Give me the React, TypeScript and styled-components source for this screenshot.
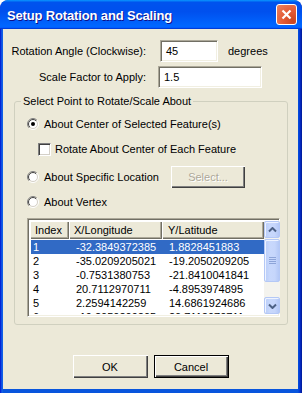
import React, { useId } from "react";
import styled, { createGlobalStyle } from "styled-components";

const Global = createGlobalStyle`
  html, body { margin: 0; padding: 0; background: #ffffff; }
  body { width: 302px; height: 393px; overflow: hidden; }
  #root { width: 302px; height: 393px; }
`;

const Window = styled.div`
  width: 302px;
  height: 393px;
  box-sizing: border-box;
  display: flex;
  flex-direction: column;
  background: linear-gradient(90deg, #0019cf 0, #0831d9 1px, #166aee 2px, #0855dd 3px, #0855dd 298px, #0042d6 299px, #0831d9 300px, #001ea0 301px);
  border-radius: 8px 8px 0 0;
  overflow: hidden;
  font-family: "Liberation Sans", Arial, sans-serif;
  font-size: 11px;
  color: #000;
`;

const TitleBar = styled.div`
  height: 29px;
  flex: none;
  display: flex;
  align-items: center;
  padding: 0 5px 0 7px;
  box-sizing: border-box;
  background: linear-gradient(180deg, #0997ff 0, #0053ee 8%, #0050ee 40%, #0066ff 88%, #0066ff 93%, #005bff 95%, #003dd7 96%, #003dd7 100%);
  border-radius: 8px 8px 0 0;
`;

const TitleText = styled.span`
  color: #fff;
  font-family: "Liberation Sans", Arial, sans-serif;
  font-weight: bold;
  font-size: 13px;
  letter-spacing: -0.15px;
  text-shadow: 1px 1px #0f1089;
  padding-top: 1px;
`;

const CloseButton = styled.div`
  margin-left: auto;
  width: 21px;
  height: 21px;
  box-sizing: border-box;
  border: 1px solid #fff;
  border-radius: 3px;
  background: radial-gradient(circle at 85% 85%, #c94520 0, #e35a35 45%, #ec8462 100%);
  display: flex;
  align-items: center;
  justify-content: center;
  margin-top: -1px;
`;

const Body = styled.div`
  flex: 1;
  margin: 0 4px 4px 3px;
  background: #ece9d8;
  display: flex;
  flex-direction: column;
  padding-top: 11px;
  box-sizing: border-box;
`;

const FieldRow = styled.div<{ $mt?: number }>`
  display: grid;
  grid-template-columns: 143px auto auto;
  justify-content: start;
  column-gap: 14px;
  align-items: center;
  height: 22px;
  margin-top: ${(p) => p.$mt ?? 0}px;
`;

const FieldLabel = styled.span`
  text-align: right;
  white-space: nowrap;
`;

const TextBox = styled.div<{ $w: number; $shift?: number }>`
  width: ${(p) => p.$w}px;
  height: 22px;
  box-sizing: border-box;
  background: #fff;
  border: 1px solid;
  border-color: #aca899 #ffffff #ffffff #aca899;
  box-shadow: inset 1px 1px #716f64, inset -1px -1px #f1efe2;
  padding-left: 5px;
  display: flex;
  align-items: center;
  margin-left: ${(p) => p.$shift ?? 0}px;
`;

const Unit = styled.span`
  margin-left: -4px;
`;

const GroupBox = styled.fieldset`
  margin: 7px 10px 0 11px;
  padding: 0 7px 7px 12px;
  border: 1px solid #d0d0bf;
  border-radius: 3px;
  min-width: 0;
  display: flex;
  flex-direction: column;
`;

const Legend = styled.legend`
  padding: 0 2px;
  margin-left: -6px;
  line-height: 12px;
  font-size: 11px;
`;

const OptionRow = styled.div<{ $h: number; $mt: number; $indent?: number }>`
  display: flex;
  align-items: center;
  height: ${(p) => p.$h}px;
  margin-top: ${(p) => p.$mt}px;
  padding-left: ${(p) => p.$indent ?? 0}px;
  white-space: nowrap;
`;

const RadioLabel = styled.span<{ $w?: number }>`
  margin-left: 5px;
  ${(p) => (p.$w ? `width: ${p.$w}px;` : "")}
`;

const CheckBox = styled.div`
  width: 13px;
  height: 13px;
  box-sizing: border-box;
  background: #fff;
  border: 1px solid;
  border-color: #808080 #ffffff #ffffff #808080;
  box-shadow: inset 1px 1px #404040, inset -1px -1px #d4d0c8;
`;

const CheckLabel = styled.span`
  margin-left: 4px;
`;

const ClassicButton = styled.div<{ $default?: boolean; $disabled?: boolean; $w: number; $h: number }>`
  width: ${(p) => p.$w}px;
  height: ${(p) => p.$h}px;
  box-sizing: border-box;
  background: #ece9d8;
  display: flex;
  align-items: center;
  justify-content: center;
  color: ${(p) => (p.$disabled ? "#aca899" : "#000")};
  text-shadow: ${(p) => (p.$disabled ? "1px 1px #ffffff" : "none")};
  border: ${(p) => (p.$default ? "1px solid #000" : "none")};
  box-shadow: inset 1px 1px #ffffff, inset -1px -1px #404040, inset -2px -2px #808080;
`;

const ListBox = styled.div`
  margin-top: 8px;
  height: 99px;
  box-sizing: border-box;
  border: 1px solid;
  border-color: #aca899 #ffffff #ffffff #aca899;
  box-shadow: inset 1px 1px #716f64, inset -1px -1px #f1efe2;
  padding: 2px;
  display: flex;
  background: #fff;
`;

const Table = styled.div`
  width: 234px;
  flex: none;
  display: flex;
  flex-direction: column;
  overflow: hidden;
`;

const HeaderRow = styled.div`
  display: grid;
  grid-template-columns: 39px 93px 1fr;
  height: 18px;
  flex: none;
`;

const HeaderCell = styled.div<{ $pad: number }>`
  background: #ece9d8;
  box-sizing: border-box;
  padding-left: ${(p) => p.$pad}px;
  display: flex;
  align-items: center;
  box-shadow: inset 1px 1px #ffffff, inset -1px -1px #716f64, inset -2px -2px #aca899;
`;

const Rows = styled.div`
  margin-top: 1px;
  display: flex;
  flex-direction: column;
`;

const DataRow = styled.div<{ $selected?: boolean }>`
  display: grid;
  grid-template-columns: 38px 93px 1fr;
  height: 14px;
  line-height: 14px;
  flex: none;
  margin-left: 1px;
  background: ${(p) => (p.$selected ? "#316ac5" : "transparent")};
  color: ${(p) => (p.$selected ? "#ffffff" : "#000")};
`;

const DataCell = styled.span<{ $pad: number }>`
  padding-left: ${(p) => p.$pad}px;
  white-space: nowrap;
`;

const ScrollBar = styled.div`
  width: 16px;
  flex: none;
  display: flex;
  flex-direction: column;
  background: #f4f3ee;
`;

const ScrollButton = styled.div<{ $h: number; $mt?: number }>`
  height: ${(p) => p.$h}px;
  margin-top: ${(p) => p.$mt ?? 0}px;
  flex: none;
  box-sizing: border-box;
  border: 1px solid #b4c8f6;
  border-radius: 2px;
  background: linear-gradient(90deg, #b9cdf8 0%, #c8d8fc 35%, #c6d6fb 70%, #b4c8f6 100%);
  box-shadow: inset 1px 1px #eef3ff;
  display: flex;
  align-items: center;
  justify-content: center;
`;

const Track = styled.div`
  flex: 1;
`;

const ButtonRow = styled.div`
  display: flex;
  justify-content: center;
  gap: 6px;
  margin-top: 30px;
`;

function Radio({ checked }: { checked?: boolean }) {
  const id = useId().replace(/:/g, "");
  return (
    <svg width="12" height="12" viewBox="0 0 12 12" style={{ flex: "none" }}>
      <defs>
        <linearGradient id={`o${id}`} x1="0" y1="0" x2="1" y2="1">
          <stop offset="0.5" stopColor="#808080" />
          <stop offset="0.5" stopColor="#ffffff" />
        </linearGradient>
        <linearGradient id={`i${id}`} x1="0" y1="0" x2="1" y2="1">
          <stop offset="0.5" stopColor="#404040" />
          <stop offset="0.5" stopColor="#d4d0c8" />
        </linearGradient>
      </defs>
      <circle cx="6" cy="6" r="5.5" fill="none" stroke={`url(#o${id})`} strokeWidth="1" />
      <circle cx="6" cy="6" r="4.5" fill="#fff" stroke={`url(#i${id})`} strokeWidth="1" />
      {checked && <circle cx="6" cy="6" r="2" fill="#000" />}
    </svg>
  );
}

function Chevron({ down }: { down?: boolean }) {
  return (
    <svg width="9" height="6" viewBox="0 0 9 6">
      <path
        d={down ? "M1 1.5 L4.5 5 L8 1.5" : "M1 4.5 L4.5 1 L8 4.5"}
        fill="none"
        stroke="#4d6185"
        strokeWidth="2"
      />
    </svg>
  );
}

function Grip() {
  return (
    <svg width="7" height="8" viewBox="0 0 7 8">
      {[0.5, 2.5, 4.5, 6.5].map((y) => (
        <line key={y} x1="0" y1={y} x2="7" y2={y} stroke="#8da4d8" strokeWidth="1" />
      ))}
    </svg>
  );
}

const rows = [
  ["1", "-32.3849372385", "1.8828451883"],
  ["2", "-35.0209205021", "-19.2050209205"],
  ["3", "-0.7531380753", "-21.8410041841"],
  ["4", "20.7112970711", "-4.8953974895"],
  ["5", "2.2594142259", "14.6861924686"],
  ["6", "-19.2050209205", "20.7112970711"],
];

export default function App() {
  return (
    <>
      <Global />
      <Window>
        <TitleBar>
          <TitleText>Setup Rotation and Scaling</TitleText>
          <CloseButton>
            <svg width="11" height="11" viewBox="0 0 11 11">
              <path d="M1.5 1.5 L9.5 9.5 M9.5 1.5 L1.5 9.5" stroke="#fff" strokeWidth="2.2" />
            </svg>
          </CloseButton>
        </TitleBar>
        <Body>
          <FieldRow>
            <FieldLabel>Rotation Angle (Clockwise):</FieldLabel>
            <TextBox $w={58}>45</TextBox>
            <Unit>degrees</Unit>
          </FieldRow>
          <FieldRow $mt={4}>
            <FieldLabel>Scale Factor to Apply:</FieldLabel>
            <TextBox $w={104} $shift={-2}>1.5</TextBox>
          </FieldRow>
          <GroupBox>
            <Legend>Select Point to Rotate/Scale About</Legend>
            <OptionRow $h={16} $mt={9}>
              <Radio checked />
              <RadioLabel>About Center of Selected Feature(s)</RadioLabel>
            </OptionRow>
            <OptionRow $h={16} $mt={9} $indent={11}>
              <CheckBox />
              <CheckLabel>Rotate About Center of Each Feature</CheckLabel>
            </OptionRow>
            <OptionRow $h={22} $mt={9}>
              <Radio />
              <RadioLabel $w={127}>About Specific Location</RadioLabel>
              <ClassicButton $w={74} $h={22} $disabled>
                Select...
              </ClassicButton>
            </OptionRow>
            <OptionRow $h={16} $mt={6}>
              <Radio />
              <RadioLabel>About Vertex</RadioLabel>
            </OptionRow>
            <ListBox>
              <Table>
                <HeaderRow>
                  <HeaderCell $pad={5}>Index</HeaderCell>
                  <HeaderCell $pad={5}>X/Longitude</HeaderCell>
                  <HeaderCell $pad={6}>Y/Latitude</HeaderCell>
                </HeaderRow>
                <Rows>
                  {rows.map((r, i) => (
                    <DataRow key={r[0]} $selected={i === 0}>
                      <DataCell $pad={2}>{r[0]}</DataCell>
                      <DataCell $pad={7}>{r[1]}</DataCell>
                      <DataCell $pad={7}>{r[2]}</DataCell>
                    </DataRow>
                  ))}
                </Rows>
              </Table>
              <ScrollBar>
                <ScrollButton $h={17}>
                  <Chevron />
                </ScrollButton>
                <ScrollButton $h={43} $mt={1}>
                  <Grip />
                </ScrollButton>
                <Track />
                <ScrollButton $h={17}>
                  <Chevron down />
                </ScrollButton>
              </ScrollBar>
            </ListBox>
          </GroupBox>
          <ButtonRow>
            <ClassicButton $w={75} $h={23}>
              OK
            </ClassicButton>
            <ClassicButton $w={75} $h={23} $default>
              Cancel
            </ClassicButton>
          </ButtonRow>
        </Body>
      </Window>
    </>
  );
}
